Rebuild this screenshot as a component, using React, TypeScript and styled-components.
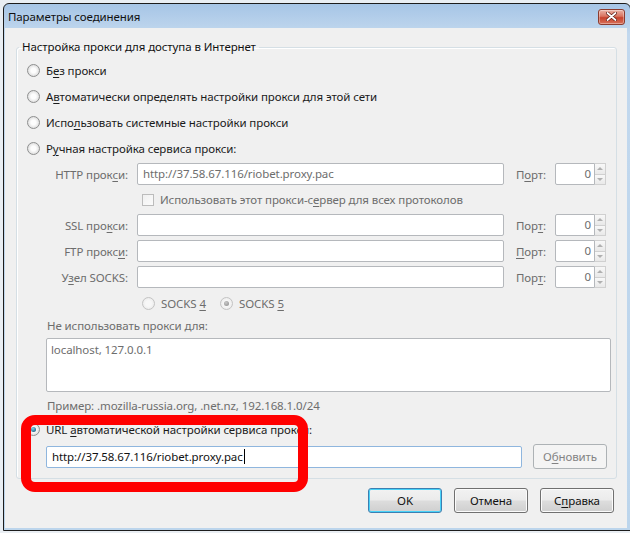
import React from 'react';
import styled, { createGlobalStyle, css } from 'styled-components';

const GlobalStyle = createGlobalStyle`
	html, body {
		margin: 0;
		padding: 0;
	}
	body {
		font-family: "Noto Sans", "Open Sans", sans-serif;
		font-size: 11.5px;
		letter-spacing: -0.1px;
		color: #1b1b1b;
	}
`;

const Desktop = styled.div`
	position: relative;
	width: 630px;
	height: 533px;
	overflow: hidden;
	background: #e9eef3;
`;

const Window = styled.div`
	margin: 3px 0 0 3px;
	width: 628px;
	height: 528px;
	box-sizing: border-box;
	border: 1px solid #1c1c1c;
	border-radius: 6px 6px 0 0;
	background: linear-gradient(#a6c5e6, #c2d8ee 30px, #bcd5ec);
	padding: 0 3px 2px 1px;
	display: flex;
	flex-direction: column;
`;

const TitleBar = styled.div`
	height: 24px;
	flex: none;
	display: flex;
	align-items: center;
	justify-content: space-between;
	padding: 0 2px 0 3px;
`;

const Title = styled.span`
	font-size: 11.5px;
	color: #111;
`;

const CloseButton = styled.div`
	width: 27px;
	height: 16px;
	margin-top: 1px;
	box-sizing: border-box;
	border: 1px solid #8c3b2e;
	border-radius: 3px;
	background: linear-gradient(#eab3a6 0%, #d9735f 45%, #c7432d 55%, #d7705a 100%);
	box-shadow: inset 0 0 0 1px rgba(255, 255, 255, 0.35);
	display: flex;
	align-items: center;
	justify-content: center;
`;

const Client = styled.div`
	flex: 1;
	background: #f0f0f0;
	padding: 11px 10px 0 11px;
`;

const GroupBox = styled.fieldset`
	margin: 0;
	min-width: 0;
	padding: 2px 5px 9px 10px;
	border: 1px solid #d5dfe5;
	border-radius: 3px;
	box-shadow: inset 1px 1px 0 #fff;
`;

const GroupTitle = styled.legend`
	margin-left: -8px;
	padding: 0 3px;
	line-height: 16px;
	color: #111;
`;

const RadioRow = styled.div<{ $indent?: number }>`
	height: 26px;
	display: flex;
	align-items: center;
	padding-left: ${p => p.$indent ?? 0}px;
`;

const RadioCircle = styled.span<{ $checked?: boolean; $disabled?: boolean }>`
	position: relative;
	width: 13px;
	height: 13px;
	box-sizing: border-box;
	margin-right: 6px;
	border-radius: 50%;
	border: 1px solid ${p => (p.$disabled ? '#c3c3c3' : '#8e8f8f')};
	background: ${p =>
		p.$disabled
			? 'radial-gradient(circle, #f7f7f7 0 35%, #ececec 75%)'
			: 'radial-gradient(circle, #fdfdfd 0 30%, #dedede 75%, #cfcfcf 100%)'};
	flex: none;
	${p =>
		p.$checked &&
		css`
			&::after {
				content: '';
				position: absolute;
				left: 3px;
				top: 3px;
				width: 5px;
				height: 5px;
				border-radius: 50%;
				background: ${p.$disabled
					? 'radial-gradient(circle at 40% 35%, #c9c9c9, #8a8a8a)'
					: 'radial-gradient(circle at 40% 35%, #7fd4f0, #1a5e80 80%)'};
			}
		`}
`;

const Text = styled.span<{ $muted?: boolean }>`
	color: ${p => (p.$muted ? '#6d6d6d' : '#1b1b1b')};
	white-space: nowrap;
`;

const Key = styled.u`
	text-decoration-thickness: 1px;
	text-underline-offset: 2px;
`;

const FieldRow = styled.div`
	height: 26px;
	display: flex;
	align-items: center;
	padding-left: 20px;
`;

const FieldLabel = styled.span`
	width: 81px;
	margin-right: 9px;
	text-align: right;
	color: #6d6d6d;
	white-space: nowrap;
`;

const TextBox = styled.div<{ $width: number; $focused?: boolean; $disabled?: boolean }>`
	width: ${p => p.$width}px;
	height: 22px;
	box-sizing: border-box;
	border: 1px solid ${p => (p.$focused ? '#8fb6de' : '#b5b8bc')};
	border-radius: 2px;
	background: #fff;
	padding: 0 5px;
	line-height: 20px;
	color: ${p => (p.$disabled ? '#6d6d6d' : '#111')};
	white-space: nowrap;
	overflow: hidden;
	flex: none;
`;

const Caret = styled.span`
	display: inline-block;
	width: 1px;
	height: 15px;
	margin-left: 1px;
	vertical-align: -3px;
	background: #000;
`;

const PortLabel = styled.span`
	width: 39px;
	margin-left: 12px;
	color: #6d6d6d;
`;

const Spin = styled.div`
	display: flex;
	height: 22px;
`;

const SpinValue = styled.div`
	width: 40px;
	box-sizing: border-box;
	border: 1px solid #b5b8bc;
	border-radius: 2px 0 0 2px;
	background: #fff;
	text-align: right;
	padding-right: 3px;
	line-height: 20px;
	color: #6d6d6d;
`;

const SpinArrows = styled.div`
	width: 11px;
	display: flex;
	flex-direction: column;
`;

const SpinArrow = styled.div<{ $down?: boolean }>`
	flex: 1;
	box-sizing: border-box;
	border: 1px solid #d0d0d0;
	border-left: none;
	${p => (p.$down ? 'border-top: none;' : '')}
	background: linear-gradient(#f8f8f8, #e9e9e9);
	display: flex;
	align-items: center;
	justify-content: center;
	&::after {
		content: '';
		border-left: 3px solid transparent;
		border-right: 3px solid transparent;
		${p => (p.$down ? 'border-top: 3px solid #b0b0b0;' : 'border-bottom: 3px solid #b0b0b0;')}
	}
`;

const CheckRow = styled.div`
	height: 25px;
	display: flex;
	align-items: center;
	padding-left: 115px;
`;

const CheckBox = styled.span`
	width: 12px;
	height: 12px;
	box-sizing: border-box;
	margin-right: 6px;
	border: 1px solid #bcbcbc;
	background: linear-gradient(135deg, #f0f0f0, #fbfbfb);
	flex: none;
`;

const SocksOption = styled.span<{ $width?: number }>`
	display: inline-flex;
	align-items: center;
	width: ${p => (p.$width ? `${p.$width}px` : 'auto')};
`;

const Caption = styled.div<{ $top?: number }>`
	height: 20px;
	line-height: 20px;
	margin-top: ${p => p.$top ?? 0}px;
	padding-left: 20px;
	color: #6d6d6d;
`;

const TextArea = styled.div`
	margin: 2px 0 0 19px;
	height: 54px;
	box-sizing: border-box;
	border: 1px solid #b5b8bc;
	border-radius: 2px;
	background: #fff;
	padding: 3px 4px;
	line-height: 16px;
	color: #6d6d6d;
`;

const UrlRow = styled.div`
	height: 25px;
	margin-top: 2px;
	display: flex;
	align-items: center;
	padding-left: 19px;
	gap: 11px;
`;

const Button = styled.div<{ $default?: boolean; $disabled?: boolean }>`
	width: 74px;
	height: 25px;
	box-sizing: border-box;
	border-radius: 3px;
	display: flex;
	align-items: center;
	justify-content: center;
	border: 1px solid #707070;
	background: linear-gradient(#f2f2f2 0%, #ebebeb 48%, #dddddd 52%, #cfcfcf 100%);
	box-shadow: inset 0 0 0 1px #fbfbfb;
	color: #111;
	${p =>
		p.$default &&
		css`
			border-color: #3c7fb1;
			box-shadow: inset 0 0 0 1px #48d2f8;
		`}
	${p =>
		p.$disabled &&
		css`
			border-color: #adb2b5;
			background: #f4f4f4;
			box-shadow: none;
			color: #838383;
		`}
`;

const ButtonBar = styled.div`
	margin-top: 9px;
	display: flex;
	justify-content: flex-end;
	gap: 12px;
	padding-right: 3px;
`;

const Highlight = styled.div`
	position: absolute;
	left: 21px;
	top: 415px;
	width: 287px;
	height: 77px;
	box-sizing: border-box;
	border: 10px solid #ff0000;
	border-radius: 14px;
	pointer-events: none;
`;

const proxyRows = [
	{ label: <>SSL про<Key>к</Key>си:</>, port: <>Пор<Key>т</Key>:</> },
	{ label: <>FTP прокс<Key>и</Key>:</>, port: <><Key>П</Key>орт:</> },
	{ label: <>У<Key>з</Key>ел SOCKS:</>, port: <>Пор<Key>т</Key>:</> },
];

const PortSpin: React.FC = () => (
	<Spin>
		<SpinValue>0</SpinValue>
		<SpinArrows>
			<SpinArrow />
			<SpinArrow $down />
		</SpinArrows>
	</Spin>
);

const App: React.FC = () => {
	const pacUrl = 'http://37.58.67.116/riobet.proxy.pac';

	return (
		<Desktop>
			<GlobalStyle />
			<Window>
				<TitleBar>
					<Title>Параметры соединения</Title>
					<CloseButton>
						<svg width="11" height="9" viewBox="0 0 11 9">
							<path d="M1.5 1 L9.5 8 M9.5 1 L1.5 8" stroke="#5a1a12" strokeWidth="3.2" strokeLinecap="round" />
							<path d="M1.5 1 L9.5 8 M9.5 1 L1.5 8" stroke="#fff" strokeWidth="1.8" strokeLinecap="round" />
						</svg>
					</CloseButton>
				</TitleBar>
				<Client>
					<GroupBox>
						<GroupTitle>Настройка прокси для доступа в Интернет</GroupTitle>
						<RadioRow>
							<RadioCircle />
							<Text>Б<Key>е</Key>з прокси</Text>
						</RadioRow>
						<RadioRow>
							<RadioCircle />
							<Text>А<Key>в</Key>томатически определять настройки прокси для этой сети</Text>
						</RadioRow>
						<RadioRow>
							<RadioCircle />
							<Text>Испо<Key>л</Key>ьзовать системные настройки прокси</Text>
						</RadioRow>
						<RadioRow>
							<RadioCircle />
							<Text>Р<Key>у</Key>чная настройка сервиса прокси:</Text>
						</RadioRow>

						<FieldRow>
							<FieldLabel>HTTP прок<Key>с</Key>и:</FieldLabel>
							<TextBox $width={367} $disabled>{pacUrl}</TextBox>
							<PortLabel>П<Key>о</Key>рт:</PortLabel>
							<PortSpin />
						</FieldRow>
						<CheckRow>
							<CheckBox />
							<Text $muted>Использовать этот прокси-с<Key>е</Key>рвер для всех протоколов</Text>
						</CheckRow>
						{proxyRows.map((row, i) => (
							<FieldRow key={i}>
								<FieldLabel>{row.label}</FieldLabel>
								<TextBox $width={367} $disabled />
								<PortLabel>{row.port}</PortLabel>
								<PortSpin />
							</FieldRow>
						))}
						<RadioRow $indent={115}>
							<SocksOption $width={78}>
								<RadioCircle $disabled />
								<Text $muted>SOCKS <Key>4</Key></Text>
							</SocksOption>
							<SocksOption>
								<RadioCircle $disabled $checked />
								<Text $muted>SOCKS <Key>5</Key></Text>
							</SocksOption>
						</RadioRow>

						<Caption>Не использовать прокси для:</Caption>
						<TextArea>localhost, 127.0.0.1</TextArea>
						<Caption $top={4}>Пример: .mozilla-russia.org, .net.nz, 192.168.1.0/24</Caption>

						<RadioRow>
							<RadioCircle $checked />
							<Text>URL <Key>а</Key>втоматической настройки сервиса прокси:</Text>
						</RadioRow>
						<UrlRow>
							<TextBox $width={476} $focused>
								{pacUrl}
								<Caret />
							</TextBox>
							<Button $disabled>О<Key>б</Key>новить</Button>
						</UrlRow>
					</GroupBox>
					<ButtonBar>
						<Button $default>OK</Button>
						<Button>Отмена</Button>
						<Button>С<Key>п</Key>равка</Button>
					</ButtonBar>
				</Client>
			</Window>
			<Highlight />
		</Desktop>
	);
};

export default App;
